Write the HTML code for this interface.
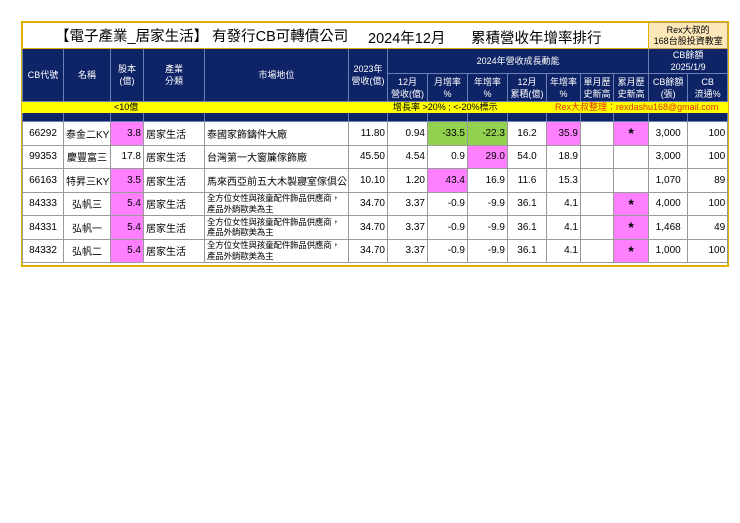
<!DOCTYPE html>
<html><head><meta charset="utf-8"><style>
body{margin:0;background:#fff;width:740px;height:523px;position:relative;font-family:"Liberation Sans","Noto Sans CJK TC",sans-serif;}
.frame{position:absolute;left:21px;top:21px;width:704px;height:242px;border:2px solid #e0b000;}
table{position:absolute;left:22px;top:22px;width:705px;border-collapse:collapse;table-layout:fixed;font-size:10px;}
td{padding:0 2px;overflow:hidden;white-space:nowrap;border:1px solid #9a9a9a;box-sizing:border-box;}
.h td{background:#0f2466;color:#fff;text-align:center;border-color:#6c7fb5;line-height:12px;font-size:9px;padding:0;}
.y td{background:#ffff00;height:11px;font-size:9px;line-height:10px;border-color:#ffff00;padding-top:0;padding-bottom:0;}
.n td{background:#0f2466;height:9px;border-color:#6c7fb5;}
.d td{height:23.5px;text-align:right;color:#000;}
.d td.c{text-align:center}.d td.l{text-align:left}
.p{background:#ff80ff}.g{background:#92d050}
.s{font-size:14px;font-weight:bold}
.w{white-space:normal!important;line-height:10.5px;font-size:8.5px;letter-spacing:-0.2px}
</style></head><body>
<div class="frame"></div>
<table>
<colgroup><col style="width:41px"><col style="width:47px"><col style="width:33px"><col style="width:61px"><col style="width:144px"><col style="width:39px"><col style="width:40px"><col style="width:40px"><col style="width:40px"><col style="width:39px"><col style="width:34px"><col style="width:33px"><col style="width:35px"><col style="width:39px"><col style="width:40px"></colgroup>
<tr style="height:26px"><td colspan="13" style="border-color:#e0b000;font-size:14.5px;padding-left:32px;position:relative">【電子產業_居家生活】 有發行CB可轉債公司<span style="position:absolute;left:345px;top:4px">2024年12月</span><span style="position:absolute;left:448px;top:4px">累積營收年增率排行</span></td><td colspan="2" style="background:#fbe7b8;text-align:center;font-size:9px;line-height:11px;border-color:#c9a24a;padding:0">Rex大叔的<br>168台股投資教室</td></tr>
<tr class="h" style="height:22px"><td rowspan="2">CB代號</td><td rowspan="2">名稱</td><td rowspan="2">股本<br>(億)</td><td rowspan="2">產業<br>分類</td><td rowspan="2">市場地位</td><td rowspan="2">2023年<br>營收(億)</td><td colspan="7">2024年營收成長動能</td><td colspan="2">CB餘額<br>2025/1/9</td></tr>
<tr class="h" style="height:28px"><td>12月<br>營收(億)</td><td>月增率<br>%</td><td>年增率<br>%</td><td>12月<br>累積(億)</td><td>年增率<br>%</td><td>單月歷<br>史新高</td><td>累月歷<br>史新高</td><td>CB餘額<br>(張)</td><td>CB<br>流通%</td></tr>
<tr class="y"><td></td><td></td><td colspan="2" style="padding-left:3px">&lt;10億</td><td></td><td></td><td colspan="4" style="padding-left:5px">增長率 &gt;20% ; &lt;-20%標示</td><td colspan="5" style="color:#e03000;padding-left:8px">Rex大叔整理：rexdashu168@gmail.com</td></tr>
<tr class="n"><td></td><td></td><td></td><td></td><td></td><td></td><td></td><td></td><td></td><td></td><td></td><td></td><td></td><td></td><td></td></tr>
<tr class="d"><td class="c">66292</td><td class="c">泰金二KY</td><td class="p">3.8</td><td class="l">居家生活</td><td class="l">泰國家飾鑄件大廠</td><td>11.80</td><td>0.94</td><td class="g">-33.5</td><td class="g">-22.3</td><td class="c">16.2</td><td class="p">35.9</td><td></td><td class="p c s">*</td><td class="c">3,000</td><td>100</td></tr>
<tr class="d"><td class="c">99353</td><td class="c">慶豐富三</td><td>17.8</td><td class="l">居家生活</td><td class="l">台灣第一大窗簾傢飾廠</td><td>45.50</td><td>4.54</td><td>0.9</td><td class="p">29.0</td><td class="c">54.0</td><td>18.9</td><td></td><td></td><td class="c">3,000</td><td>100</td></tr>
<tr class="d"><td class="c">66163</td><td class="c">特昇三KY</td><td class="p">3.5</td><td class="l">居家生活</td><td class="l">馬來西亞前五大木製寢室傢俱公司</td><td>10.10</td><td>1.20</td><td class="p">43.4</td><td>16.9</td><td class="c">11.6</td><td>15.3</td><td></td><td></td><td class="c">1,070</td><td>89</td></tr>
<tr class="d"><td class="c">84333</td><td class="c">弘帆三</td><td class="p">5.4</td><td class="l">居家生活</td><td class="l w">全方位女性與孩童配件飾品供應商，<br>產品外銷歐美為主</td><td>34.70</td><td>3.37</td><td>-0.9</td><td>-9.9</td><td class="c">36.1</td><td>4.1</td><td></td><td class="p c s">*</td><td class="c">4,000</td><td>100</td></tr>
<tr class="d"><td class="c">84331</td><td class="c">弘帆一</td><td class="p">5.4</td><td class="l">居家生活</td><td class="l w">全方位女性與孩童配件飾品供應商，<br>產品外銷歐美為主</td><td>34.70</td><td>3.37</td><td>-0.9</td><td>-9.9</td><td class="c">36.1</td><td>4.1</td><td></td><td class="p c s">*</td><td class="c">1,468</td><td>49</td></tr>
<tr class="d"><td class="c">84332</td><td class="c">弘帆二</td><td class="p">5.4</td><td class="l">居家生活</td><td class="l w">全方位女性與孩童配件飾品供應商，<br>產品外銷歐美為主</td><td>34.70</td><td>3.37</td><td>-0.9</td><td>-9.9</td><td class="c">36.1</td><td>4.1</td><td></td><td class="p c s">*</td><td class="c">1,000</td><td>100</td></tr>
</table>
</body></html>
